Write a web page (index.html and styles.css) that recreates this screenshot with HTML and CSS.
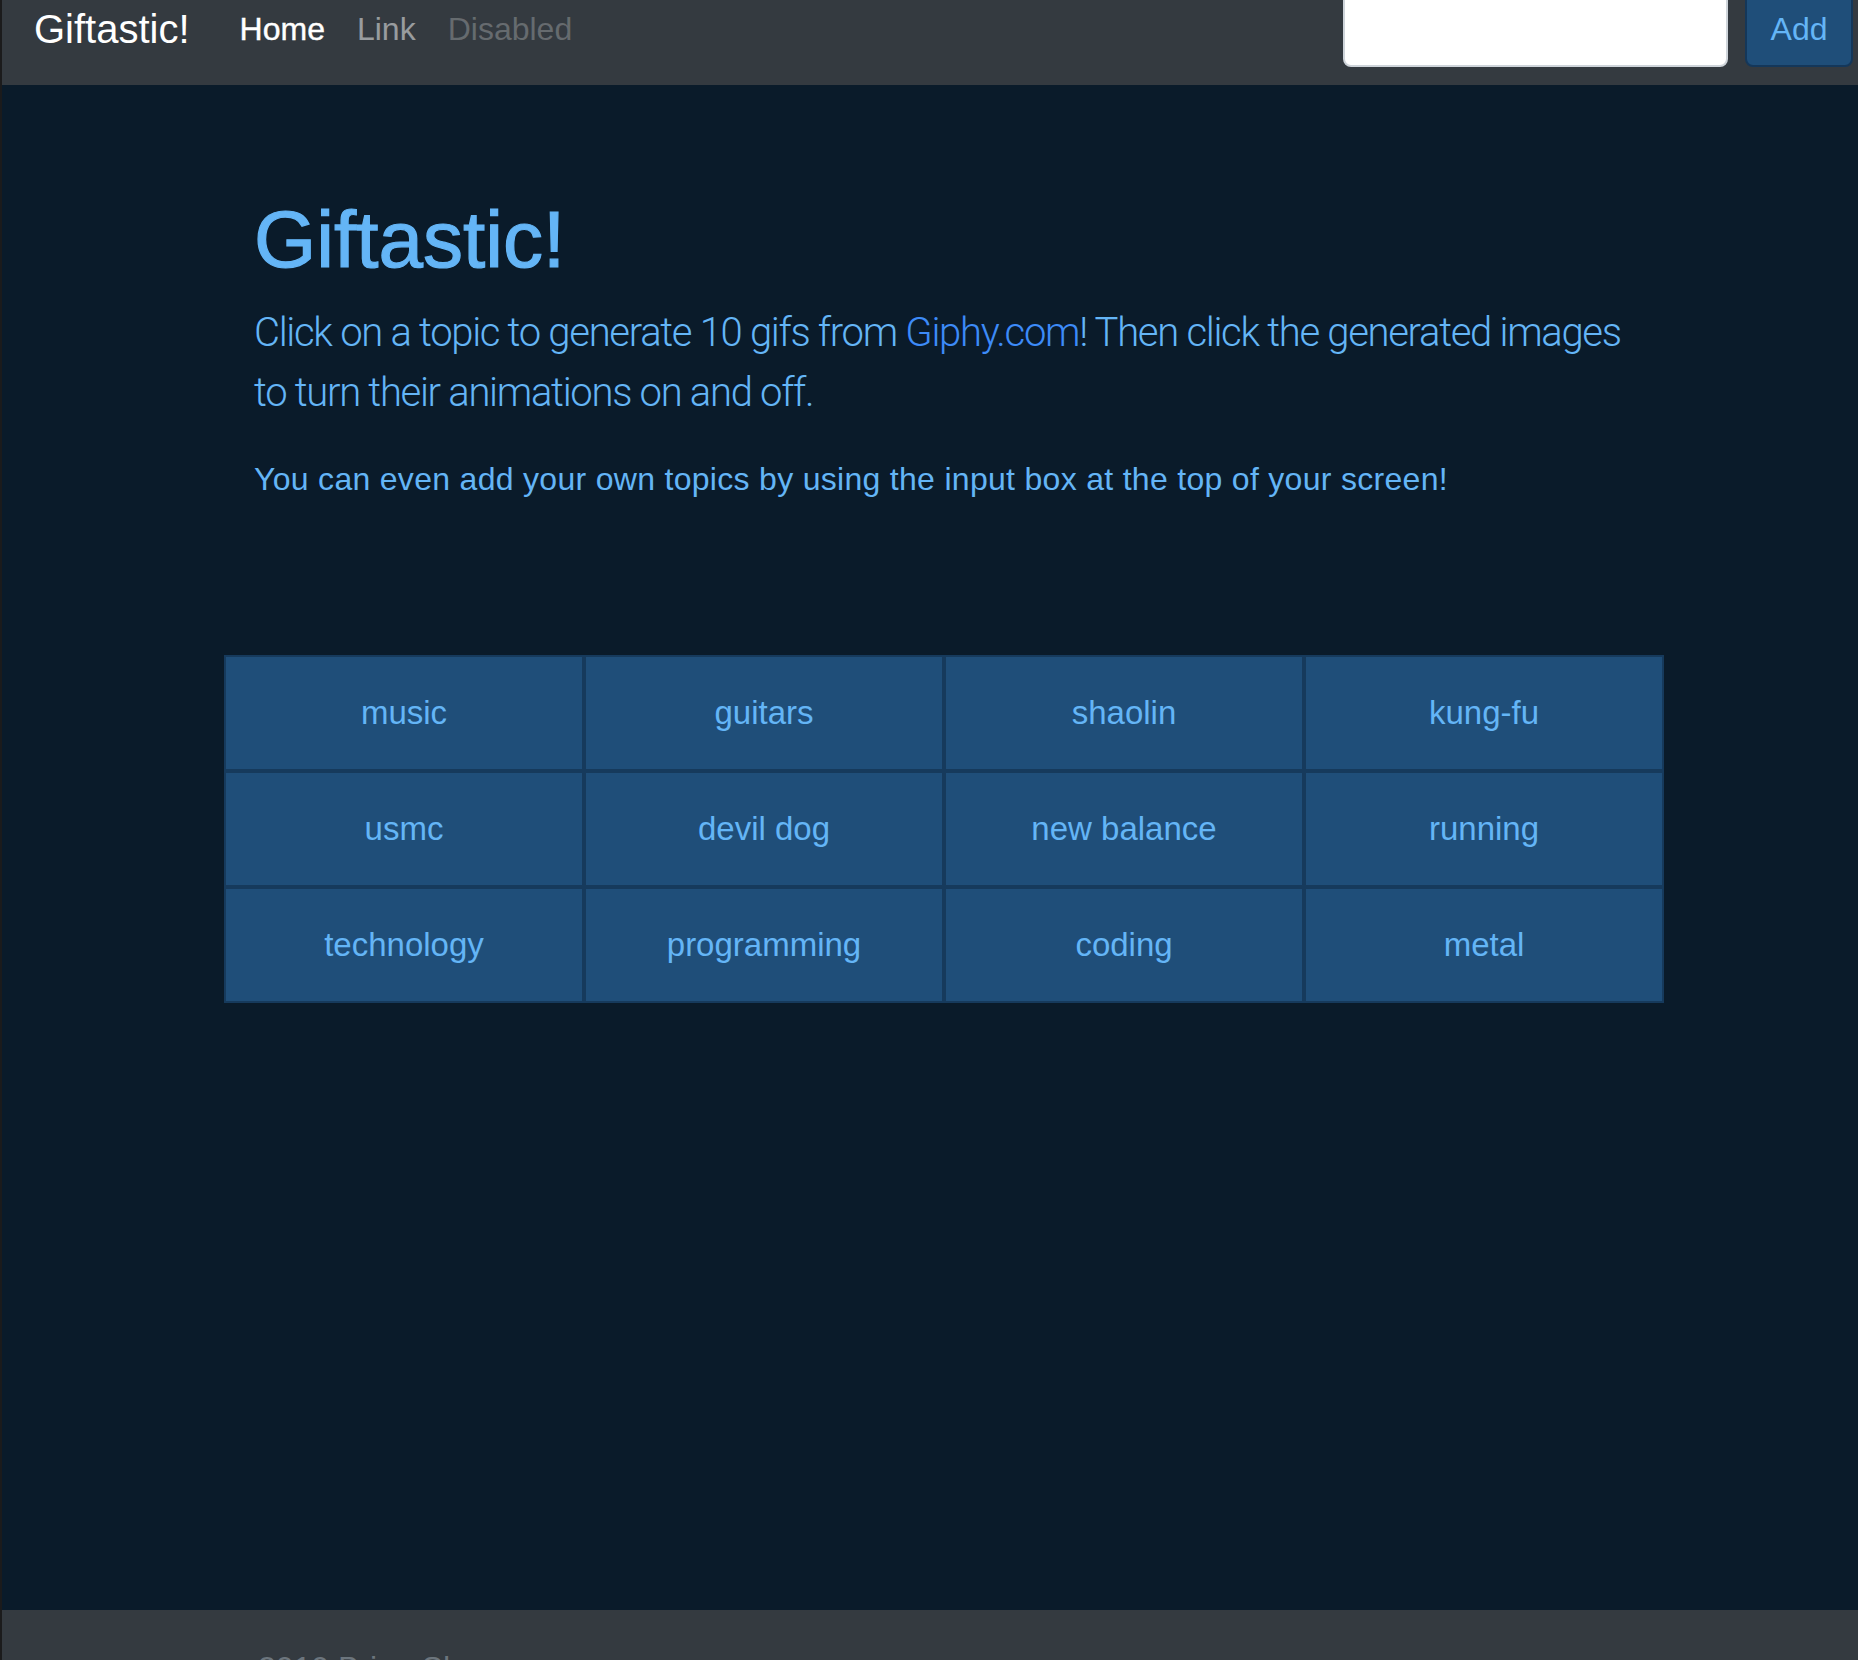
FILE: index.html
```html
<!DOCTYPE html>
<html lang="en">
<head>
<meta charset="utf-8">
<title>Giftastic!</title>
<link rel="stylesheet" href="styles.css">
</head>
<body>
<nav class="navbar">
  <div class="navbar-inner">
    <a class="brand" href="#">Giftastic!</a>
    <ul class="nav-links">
      <li><a class="nav-link active" href="#">Home</a></li>
      <li><a class="nav-link" href="#">Link</a></li>
      <li><a class="nav-link disabled" href="#">Disabled</a></li>
    </ul>
    <form class="topic-form">
      <input class="topic-input" type="text" aria-label="New topic">
      <button class="add-btn" type="button">Add</button>
    </form>
  </div>
</nav>

<main class="page-main">
  <section class="hero">
    <h1 class="hero-title">Giftastic!</h1>
    <p class="lead">Click on a topic to generate 10 gifs from <a class="giphy" href="#">Giphy.com</a>! Then click the generated images to turn their animations on and off.</p>
    <p class="sub">You can even add your own topics by using the input box at the top of your screen!</p>
  </section>

  <div class="topics">
    <button class="topic">music</button>
    <button class="topic">guitars</button>
    <button class="topic">shaolin</button>
    <button class="topic">kung-fu</button>
    <button class="topic">usmc</button>
    <button class="topic">devil dog</button>
    <button class="topic">new balance</button>
    <button class="topic">running</button>
    <button class="topic">technology</button>
    <button class="topic">programming</button>
    <button class="topic">coding</button>
    <button class="topic">metal</button>
  </div>
</main>

<footer class="footer">
  <p class="footer-text">2019 Brian Shea</p>
</footer>
</body>
</html>
```

FILE: styles.css
```css
* {
  box-sizing: border-box;
}

html, body {
  margin: 0;
  padding: 0;
}

body {
  background: #0a1b2a;
  border-left: 2px solid #1b1b1c;
  font-family: "Liberation Sans", Arial, sans-serif;
  color: #64b5f6;
  overflow: hidden;
}

/* Navbar */
.navbar {
  height: 85px;
  overflow: hidden;
  background: #343a40;
}

.navbar-inner {
  height: 112px;
  margin-top: -27px;
  display: flex;
  align-items: center;
  padding: 0 5px 0 32px;
}

.brand {
  font-size: 40px;
  line-height: 60px;
  color: #ffffff;
  text-decoration: none;
  margin-right: 34px;
}

.nav-links {
  list-style: none;
  margin: 0;
  padding: 0;
  display: flex;
}

.nav-link {
  display: block;
  padding: 0 16px;
  font-size: 32px;
  line-height: 48px;
  color: rgba(255, 255, 255, 0.5);
  text-decoration: none;
}

.nav-link.active {
  color: #ffffff;
  -webkit-text-stroke: 0.4px #ffffff;
}

.nav-link.disabled {
  color: rgba(255, 255, 255, 0.25);
}

.topic-form {
  margin-left: auto;
  display: flex;
  align-items: center;
}

.topic-input {
  width: 385px;
  height: 76px;
  margin-right: 17px;
  background: #ffffff;
  border: 2px solid #ced4da;
  border-radius: 8px;
  font-size: 32px;
  padding: 0 24px;
}

.add-btn {
  height: 76px;
  width: 108px;
  background: #1f4e79;
  border: 2px solid #14375a;
  border-radius: 8px;
  color: #64b5f6;
  font-family: "Liberation Sans", Arial, sans-serif;
  font-size: 32px;
  padding: 0;
}

/* Main */
.page-main {
  height: 1525px;
}

.hero {
  padding: 107px 30px 0 252px;
}

.hero-title {
  margin: 0 0 15px;
  font-size: 80px;
  line-height: 96px;
  font-weight: 400;
  -webkit-text-stroke: 1.2px #64b5f6;
  color: #64b5f6;
}

.lead {
  margin: 0 0 32px;
  font-family: Roboto, "Liberation Sans", Arial, sans-serif;
  font-size: 40px;
  line-height: 60px;
  font-weight: 300;
  letter-spacing: -1.3px;
  width: 1400px;
}

.giphy {
  color: #3d8bf8;
  text-decoration: none;
}

.sub {
  margin: 0;
  font-size: 32px;
  line-height: 48px;
  letter-spacing: 0.3px;
}

.topics {
  margin: 152px 0 0 222px;
  width: 1440px;
  display: grid;
  grid-template-columns: repeat(4, 1fr);
}

.topic {
  height: 116px;
  background: #1f4e79;
  border: 2px solid #163a5c;
  color: #64b5f6;
  font-family: "Liberation Sans", Arial, sans-serif;
  font-size: 33px;
  padding: 0;
}

/* Footer */
.footer {
  height: 200px;
  background: #343a40;
  padding: 34px 0 0 256px;
}

.footer-text {
  margin: 0;
  font-size: 32px;
  line-height: 48px;
  color: #6c757d;
}
```
